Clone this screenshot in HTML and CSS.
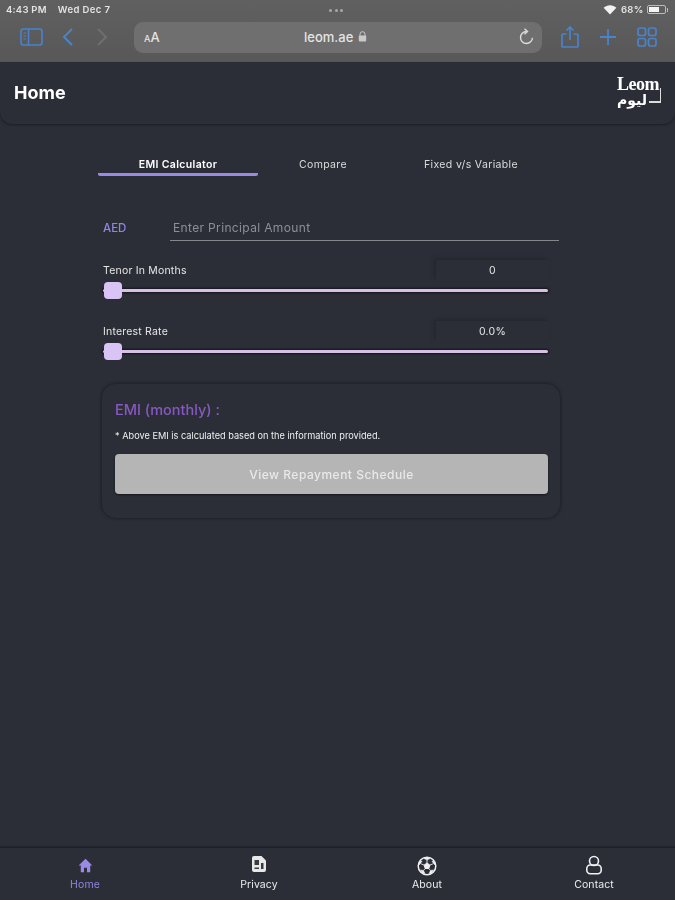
FILE: index.html
```html
<!DOCTYPE html>
<html lang="en">
<head>
<meta charset="utf-8">
<title>Leom</title>
<link rel="stylesheet" href="styles.css">
</head>
<body>
<div class="page">
  <div class="browser">
    <div class="status">
      <span class="time">4:43 PM</span><span class="date">Wed Dec 7</span>
      <span class="dots"><i></i><i></i><i></i></span>
      <span class="status-right">
        <svg class="wifi" width="14" height="11" viewBox="0 0 14 11"><path d="M7 10.500 .6 3.800C4.300.4 9.700.4 13.400 3.800z" fill="#f2f2f2"/></svg>
        <span class="batt-text">68%</span>
        <span class="battery"><span class="battery-fill"></span></span><span class="battery-tip"></span>
      </span>
    </div>
    <div class="toolbar">
      <svg class="sidebar-icon" width="24" height="20" viewBox="0 0 24 20" fill="none" stroke="#4a83cc" stroke-width="1.6"><rect x="1" y="2" width="21" height="16" rx="2.5"/><path d="M8.500 2v16"/><path d="M3.500 6h2.500M3.500 9h2.500M3.500 12h2.500" stroke-width="1.2"/></svg>
      <svg class="back" width="12" height="20" viewBox="0 0 12 20" fill="none" stroke="#4a83cc" stroke-width="2"><path d="M10 2 2 10l8 8"/></svg>
      <svg class="forward" width="12" height="20" viewBox="0 0 12 20" fill="none" stroke="#6f6f6f" stroke-width="2"><path d="M2 2l8 8-8 8"/></svg>
      <div class="url">
        <span class="aa"><small>A</small>A</span>
        <span class="address">leom.ae
          <svg width="9" height="11" viewBox="0 0 9 11"><path d="M2 5V3.200a2.500 2.500 0 0 1 5 0V5" fill="none" stroke="#c9c9c9" stroke-width="1"/><rect x="0.8" y="4.6" width="7.4" height="6" rx="1" fill="#c9c9c9"/></svg>
        </span>
        <svg class="reload" width="16" height="18" viewBox="0 0 16 18" fill="none" stroke="#dcdcdc" stroke-width="1.4"><path d="M8.500 3.500a6 6 0 1 0 6 6.200"/><path d="M6.500 .8l3 2.700-3 2.700"/></svg>
      </div>
      <div class="tools">
        <svg width="18" height="22" viewBox="0 0 18 22" fill="none" stroke="#4a83cc" stroke-width="1.7"><path d="M5.500 8H2a1 1 0 0 0-1 1v11a1 1 0 0 0 1 1h14a1 1 0 0 0 1-1V9a1 1 0 0 0-1-1h-3.500"/><path d="M9 14V1.500M5.500 4.500 9 1l3.500 3.500"/></svg>
        <svg width="16" height="16" viewBox="0 0 16 16" fill="none" stroke="#4a83cc" stroke-width="1.8"><path d="M8 0v16M0 8h16"/></svg>
        <svg width="20" height="20" viewBox="0 0 20 20" fill="none" stroke="#4a83cc" stroke-width="1.700"><rect x="1" y="1" width="7.500" height="7.500" rx="2"/><rect x="11.500" y="1" width="7.500" height="7.500" rx="2"/><rect x="1" y="11.500" width="7.500" height="7.500" rx="2"/><rect x="11.500" y="11.500" width="7.500" height="7.500" rx="2"/></svg>
      </div>
    </div>
  </div>

  <header class="app-header">
    <h1>Home</h1>
    <div class="logo">
      <span class="logo-en">Leom</span>
      <span class="logo-ar" lang="ar" dir="rtl">ليوم</span>
    </div>
  </header>

  <main class="content">
    <nav class="tabs">
      <span class="tab active">EMI Calculator</span>
      <span class="tab">Compare</span>
      <span class="tab">Fixed v/s Variable</span>
    </nav>

    <div class="amount">
      <span class="currency">AED</span>
      <span class="amount-input">Enter Principal Amount</span>
    </div>

    <div class="slider-block">
      <div class="slider-head"><span>Tenor In Months</span><span class="value">0</span></div>
      <div class="slider"><span class="thumb"></span></div>
    </div>

    <div class="slider-block second">
      <div class="slider-head"><span>Interest Rate</span><span class="value">0.0%</span></div>
      <div class="slider"><span class="thumb"></span></div>
    </div>

    <section class="card">
      <h2>EMI (monthly) :</h2>
      <p>* Above EMI is calculated based on the information provided.</p>
      <button class="schedule" type="button">View Repayment Schedule</button>
    </section>
  </main>

  <footer class="bottom-nav">
    <div class="nav-item current">
      <svg class="icon-home" width="15" height="15" viewBox="0 0 14 14"><path d="M7 .8 .6 7h2v6.200h3V9h2.800v4.200h3V7h2z" fill="#9a8ae6"/></svg>
      <span>Home</span>
    </div>
    <div class="nav-item">
      <svg class="icon-privacy" width="16" height="18" viewBox="0 0 16 18"><path d="M3 1h7.500L15 5.500V15a2 2 0 0 1-2 2H3a2 2 0 0 1-2-2V3a2 2 0 0 1 2-2z" fill="#e8e8e8"/><path d="M3.500 5h4.500v5H3.500zM3.500 12.500h4.500v1.500H3.500zM10 8h2.500v6H10z" fill="#3a3c44"/></svg>
      <span>Privacy</span>
    </div>
    <div class="nav-item">
      <svg width="20" height="20" viewBox="0 0 20 20" fill="#f0f0f0" stroke="#f0f0f0" stroke-width="1"><circle cx="10" cy="10" r="8.800" fill="none" stroke-width="1.500"/><path d="M10 7 12.900 9.100 11.800 12.500H8.200L7.100 9.100z"/><path d="M7 2.600 10 4 13 2.600 10 1.500zM15 5l2.600.6.8 3.600-1.800-1.400zM5 5l-2.600.6-.8 3.600 1.800-1.400zM13.500 14.500l3-.6-1.800 3-2.700.7zM6.500 14.500l-3-.6 1.800 3 2.700.7z" stroke-width=".5"/><path d="M10 7V4M12.900 9.100l2.900-1.200M11.800 12.500l1.700 2M8.200 12.500l-1.700 2M7.100 9.100 4.200 7.900" fill="none" stroke-width=".9"/></svg>
      <span>About</span>
    </div>
    <div class="nav-item">
      <svg class="icon-contact" width="18" height="20" viewBox="0 0 18 20" fill="none" stroke="#f0f0f0" stroke-width="1.600"><circle cx="9" cy="6" r="4.500"/><rect x="1.800" y="10" width="14.400" height="8.800" rx="3.500"/></svg>
      <span>Contact</span>
    </div>
  </footer>
</div>
</body>
</html>
```
FILE: styles.css
```css
* { box-sizing: border-box; }
html, body { margin: 0; padding: 0; }
body { background: #2b2e37; font-family: "Inter", "Open Sans", sans-serif; color: #e6e6e6; }
.page { width: 675px; height: 900px; display: flex; flex-direction: column; overflow: hidden; filter: blur(0.4px); }

.browser { height: 62px; background: linear-gradient(#606060, #585858); flex: none; }
.status { height: 17px; padding: 2px 7px 0 6px; display: flex; align-items: center; font-size: 9.500px; font-weight: 600; color: #e4e4e4; letter-spacing: .25px; position: relative; }
.date { margin-left: 11px; letter-spacing: .4px; }
.dots { position: absolute; left: 329px; top: 9px; display: flex; gap: 2.500px; }
.dots i { width: 3px; height: 3px; border-radius: 50%; background: #a8a8a8; }
.status-right { margin-left: auto; display: flex; align-items: center; }
.wifi { margin-right: 4px; }
.batt-text { margin-right: 3px; }
.battery { width: 19px; height: 9px; border: 1px solid #bbb; border-radius: 2px; padding: 1px; display: block; }
.battery-fill { display: block; width: 68%; height: 100%; background: #f5f5f5; }
.battery-tip { width: 1.500px; height: 4px; background: #bbb; margin-left: 1px; }

.toolbar { display: flex; align-items: center; height: 32px; margin-top: 4px; padding-left: 20px; }
.back { margin-left: 18px; }
.forward { margin-left: 22px; }
.url { width: 408px; height: 31px; margin-left: 26px; background: #6f6f6f; border-radius: 9px; display: flex; align-items: center; padding: 0 8px 0 10px; position: relative; }
.aa { font-size: 13px; color: #e4e4e4; font-weight: 500; }
.aa small { font-size: 9px; }
.address { position: absolute; left: 170px; top: 7px; font-size: 13px; font-weight: 500; color: #e4e4e4; display: flex; align-items: center; gap: 5px; }
.reload { margin-left: auto; }
.tools { display: flex; align-items: center; margin-left: 19px; gap: 21px; }

.app-header { height: 62px; flex: none; display: flex; align-items: center; justify-content: space-between; padding: 0 14px 2px; background: #2b2e37; border-radius: 0 0 12px 12px; box-shadow: 0 1px 2px #1c1e25; position: relative; }
.app-header h1 { margin: 0; font-size: 18px; font-weight: 700; color: #fff; }
.logo { width: 44px; height: 32px; color: #fff; display: flex; flex-direction: column; position: relative; }
.logo::before { content: ""; position: absolute; right: 0; top: 12px; width: 1.500px; height: 14px; background: #ddd; }
.logo::after { content: ""; position: absolute; right: 0; top: 25px; width: 12px; height: 1.500px; background: #ddd; }
.logo-en { font-family: "Liberation Serif", serif; font-weight: 700; font-size: 18px; line-height: 16px; letter-spacing: -.5px; }
.logo-ar { font-family: "DejaVu Sans", sans-serif; font-weight: 700; font-size: 14px; line-height: 16px; align-self: flex-start; }

.content { flex: 1; padding: 29px 0 0 98px; }
.tabs { display: grid; grid-template-columns: 160px 130px 166px; font-size: 10.500px; letter-spacing: .35px; color: #dcdcdc; text-align: center; }
.tab { height: 23px; padding-top: 5px; }
.tab.active { color: #fff; font-weight: 600; border-bottom: 3px solid #9a8ae6; border-radius: 2px; }

.amount { display: flex; align-items: flex-end; margin: 38px 0 0 5px; width: 456px; }
.currency { width: 67px; font-size: 11.500px; font-weight: 500; color: #8f86e0; padding-bottom: 6px; }
.amount-input { flex: 1; height: 27px; padding: 6px 0 0 3px; font-size: 12px; letter-spacing: .35px; color: #8d8f95; border-bottom: 1.500px solid #85878c; }

.slider-block { margin: 19px 0 0 5px; width: 446px; }
.slider-block.second { margin-top: 29px; }
.slider-head { display: flex; align-items: center; justify-content: space-between; height: 21px; font-size: 10.500px; letter-spacing: .2px; color: #e6e6e6; }
.value { width: 113px; height: 21px; line-height: 21px; text-align: center; box-shadow: -2px -2px 3px #25272f; }
.slider { height: 3px; margin-top: 8px; margin-right: 1px; background: #d9bfe3; box-shadow: 0 0 2px 1px #14141c; border-radius: 2px; position: relative; }
.thumb { position: absolute; left: 1px; top: -7px; width: 18px; height: 17px; background: #d9c4f5; border-radius: 4px; }

.card { width: 458px; height: 134px; margin: 31px 0 0 4px; padding: 16px 12px 0 13px; border-radius: 14px; background: #2b2e37; box-shadow: 0 0 3px 1px #1e2027; }
.card h2 { margin: 0; font-size: 14.500px; line-height: 20px; font-weight: 500; color: #8758c2; }
.card p { margin: 11px 0 0; font-size: 9.200px; line-height: 10px; color: #f0f0f0; }
.schedule { display: block; width: 433px; height: 40px; margin-top: 13px; border: 0; border-radius: 4px; background: #b5b5b5; color: #e9e9e9; font: 500 12px "Inter", "Open Sans", sans-serif; letter-spacing: .5px; box-shadow: 0 1px 2px #15161b; }

.bottom-nav { height: 53px; flex: none; display: grid; grid-template-columns: 174px 168px 167px 60px; padding-left: 55px; border-top: 1px solid #1e2027; box-shadow: 0 -1px 1px #24262e; }
.nav-item { width: 60px; display: flex; flex-direction: column; align-items: center; justify-content: flex-end; gap: 3px; padding-bottom: 9px; font-size: 10.500px; letter-spacing: .1px; line-height: 12px; color: #ececec; }
.nav-item.current { color: #8f86e0; }
.icon-home { margin-bottom: 3px; }
.icon-privacy { margin-bottom: 3px; }
.icon-contact { margin-bottom: 1px; }
```
